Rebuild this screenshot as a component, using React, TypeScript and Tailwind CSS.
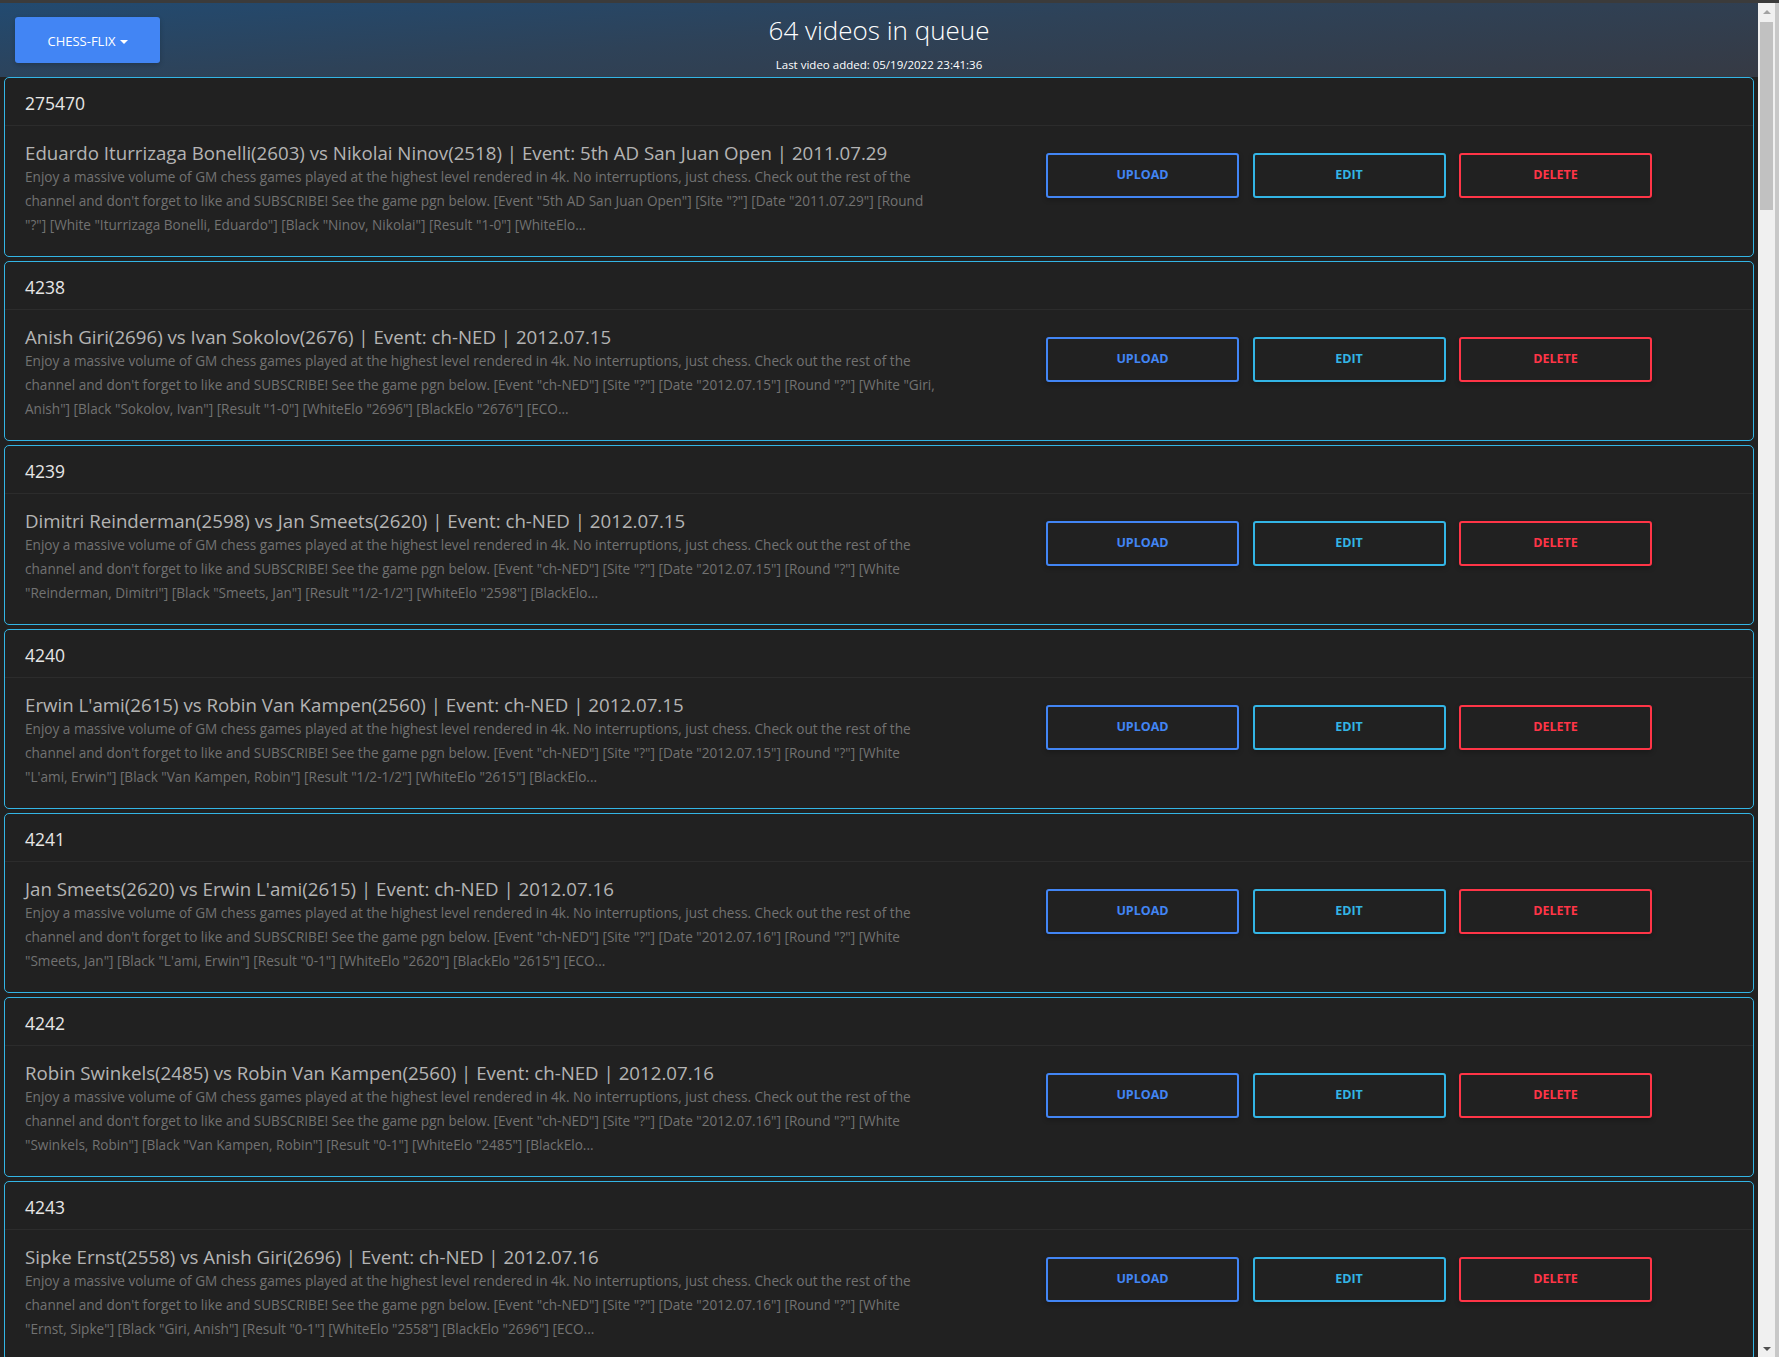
import { useState } from "react";

type Video = {
  id: string;
  title: string;
  lines: string[];
};

const intro =
  "Enjoy a massive volume of GM chess games played at the highest level rendered in 4k. No interruptions, just chess. Check out the rest of the";
const pitch = "channel and don't forget to like and SUBSCRIBE! See the game pgn below.";

const videos: Video[] = [
  {
    id: "275470",
    title: "Eduardo Iturrizaga Bonelli(2603) vs Nikolai Ninov(2518) | Event: 5th AD San Juan Open | 2011.07.29",
    lines: [
      intro,
      `${pitch} [Event "5th AD San Juan Open"] [Site "?"] [Date "2011.07.29"] [Round`,
      `"?"] [White "Iturrizaga Bonelli, Eduardo"] [Black "Ninov, Nikolai"] [Result "1-0"] [WhiteElo...`,
    ],
  },
  {
    id: "4238",
    title: "Anish Giri(2696) vs Ivan Sokolov(2676) | Event: ch-NED | 2012.07.15",
    lines: [
      intro,
      `${pitch} [Event "ch-NED"] [Site "?"] [Date "2012.07.15"] [Round "?"] [White "Giri,`,
      `Anish"] [Black "Sokolov, Ivan"] [Result "1-0"] [WhiteElo "2696"] [BlackElo "2676"] [ECO...`,
    ],
  },
  {
    id: "4239",
    title: "Dimitri Reinderman(2598) vs Jan Smeets(2620) | Event: ch-NED | 2012.07.15",
    lines: [
      intro,
      `${pitch} [Event "ch-NED"] [Site "?"] [Date "2012.07.15"] [Round "?"] [White`,
      `"Reinderman, Dimitri"] [Black "Smeets, Jan"] [Result "1/2-1/2"] [WhiteElo "2598"] [BlackElo...`,
    ],
  },
  {
    id: "4240",
    title: "Erwin L'ami(2615) vs Robin Van Kampen(2560) | Event: ch-NED | 2012.07.15",
    lines: [
      intro,
      `${pitch} [Event "ch-NED"] [Site "?"] [Date "2012.07.15"] [Round "?"] [White`,
      `"L'ami, Erwin"] [Black "Van Kampen, Robin"] [Result "1/2-1/2"] [WhiteElo "2615"] [BlackElo...`,
    ],
  },
  {
    id: "4241",
    title: "Jan Smeets(2620) vs Erwin L'ami(2615) | Event: ch-NED | 2012.07.16",
    lines: [
      intro,
      `${pitch} [Event "ch-NED"] [Site "?"] [Date "2012.07.16"] [Round "?"] [White`,
      `"Smeets, Jan"] [Black "L'ami, Erwin"] [Result "0-1"] [WhiteElo "2620"] [BlackElo "2615"] [ECO...`,
    ],
  },
  {
    id: "4242",
    title: "Robin Swinkels(2485) vs Robin Van Kampen(2560) | Event: ch-NED | 2012.07.16",
    lines: [
      intro,
      `${pitch} [Event "ch-NED"] [Site "?"] [Date "2012.07.16"] [Round "?"] [White`,
      `"Swinkels, Robin"] [Black "Van Kampen, Robin"] [Result "0-1"] [WhiteElo "2485"] [BlackElo...`,
    ],
  },
  {
    id: "4243",
    title: "Sipke Ernst(2558) vs Anish Giri(2696) | Event: ch-NED | 2012.07.16",
    lines: [
      intro,
      `${pitch} [Event "ch-NED"] [Site "?"] [Date "2012.07.16"] [Round "?"] [White`,
      `"Ernst, Sipke"] [Black "Giri, Anish"] [Result "0-1"] [WhiteElo "2558"] [BlackElo "2696"] [ECO...`,
    ],
  },
];

function VideoCard({ video }: { video: Video }) {
  return (
    <div className="shrink-0 h-[180px] rounded-[5px] border border-[#33b5e5] bg-[#212121]">
      <div className="h-[48px] flex items-center pt-[4px] px-5 border-b border-[#2c2c2c] text-[17.5px] text-[#e6e6e6]">
        {video.id}
      </div>
      <div className="flex px-5 pt-[15px]">
        <div className="w-[945px] shrink-0">
          <h5 className="text-[18.7px] leading-[24px] text-[#b4b4b4] whitespace-nowrap">{video.title}</h5>
          <p className="text-[13.6px] leading-[24px] text-[#727272]">
            {video.lines.map((l, i) => (
              <span key={i} className="block whitespace-nowrap">{l}</span>
            ))}
          </p>
        </div>
        <div className="ml-[76px] mt-[12px] flex gap-[13.5px]">
          <button className="w-[193px] h-[45px] rounded-[3px] border-2 border-[#4285f4] text-[#4285f4] text-[12.5px] font-bold shadow-[0_2px_5px_rgba(0,0,0,0.25)]">
            UPLOAD
          </button>
          <button className="w-[193px] h-[45px] rounded-[3px] border-2 border-[#33b5e5] text-[#33b5e5] text-[12.5px] font-bold shadow-[0_2px_5px_rgba(0,0,0,0.25)]">
            EDIT
          </button>
          <button className="w-[193px] h-[45px] rounded-[3px] border-2 border-[#ff3547] text-[#ff3547] text-[12.5px] font-bold shadow-[0_2px_5px_rgba(0,0,0,0.25)]">
            DELETE
          </button>
        </div>
      </div>
    </div>
  );
}

export default function App() {
  const [open, setOpen] = useState(false);

  return (
    <div className="w-[1779px] h-[1357px] overflow-hidden flex flex-col bg-[#212121] font-['Open_Sans',sans-serif]">
      <div className="h-[3px] shrink-0 bg-[#3b3b3b]" />
      <div className="flex flex-1 min-h-0">
        <div className="flex-1 flex flex-col min-w-0">
          {/* header */}
          <div className="h-[74px] shrink-0 grid grid-cols-[1fr_auto_1fr] px-[15px] bg-[linear-gradient(176deg,#224a70_0%,#2e4258_45%,#363a44_100%)]">
            <div className="pt-[14px]">
              <button
                onClick={() => setOpen(!open)}
                className="w-[145px] h-[46px] pt-[3px] rounded-[3px] bg-[#4285f4] text-white text-[13px] flex items-center justify-center gap-[4px] shadow-[0_2px_5px_rgba(0,0,0,0.2)]"
              >
                CHESS-FLIX
                <span className="w-0 h-0 border-l-[4px] border-r-[4px] border-t-[4px] border-l-transparent border-r-transparent border-t-white" />
              </button>
            </div>
            <div className="flex flex-col items-center pt-[10px]">
              <h4 className="text-[26px] font-light leading-[34px] text-white">64 videos in queue</h4>
              <p className="mt-[10px] text-[11.5px] leading-[16px] text-white">Last video added: 05/19/2022 23:41:36</p>
            </div>
            <div />
          </div>

          {/* queue */}
          <div className="flex flex-col gap-[4px] px-[4px]">
            {videos.map((v) => (
              <VideoCard key={v.id} video={v} />
            ))}
          </div>
        </div>

        {/* scrollbar */}
        <div className="w-[21px] shrink-0 flex">
          <div className="w-[17px] bg-[#f0f0f0] flex flex-col items-center">
            <div className="h-[17px] flex items-center justify-center">
              <span className="w-0 h-0 border-l-[4px] border-r-[4px] border-b-[4px] border-l-transparent border-r-transparent border-b-[#a3a3a3]" />
            </div>
            <div className="mt-[2px] w-[13px] h-[188px] bg-[#c1c1c1]" />
            <div className="flex-1" />
            <div className="h-[17px] flex items-center justify-center">
              <span className="w-0 h-0 border-l-[4px] border-r-[4px] border-t-[4px] border-l-transparent border-r-transparent border-t-[#505050]" />
            </div>
          </div>
          <div className="w-[4px] bg-[#c8c8c8]" />
        </div>
      </div>
    </div>
  );
}
